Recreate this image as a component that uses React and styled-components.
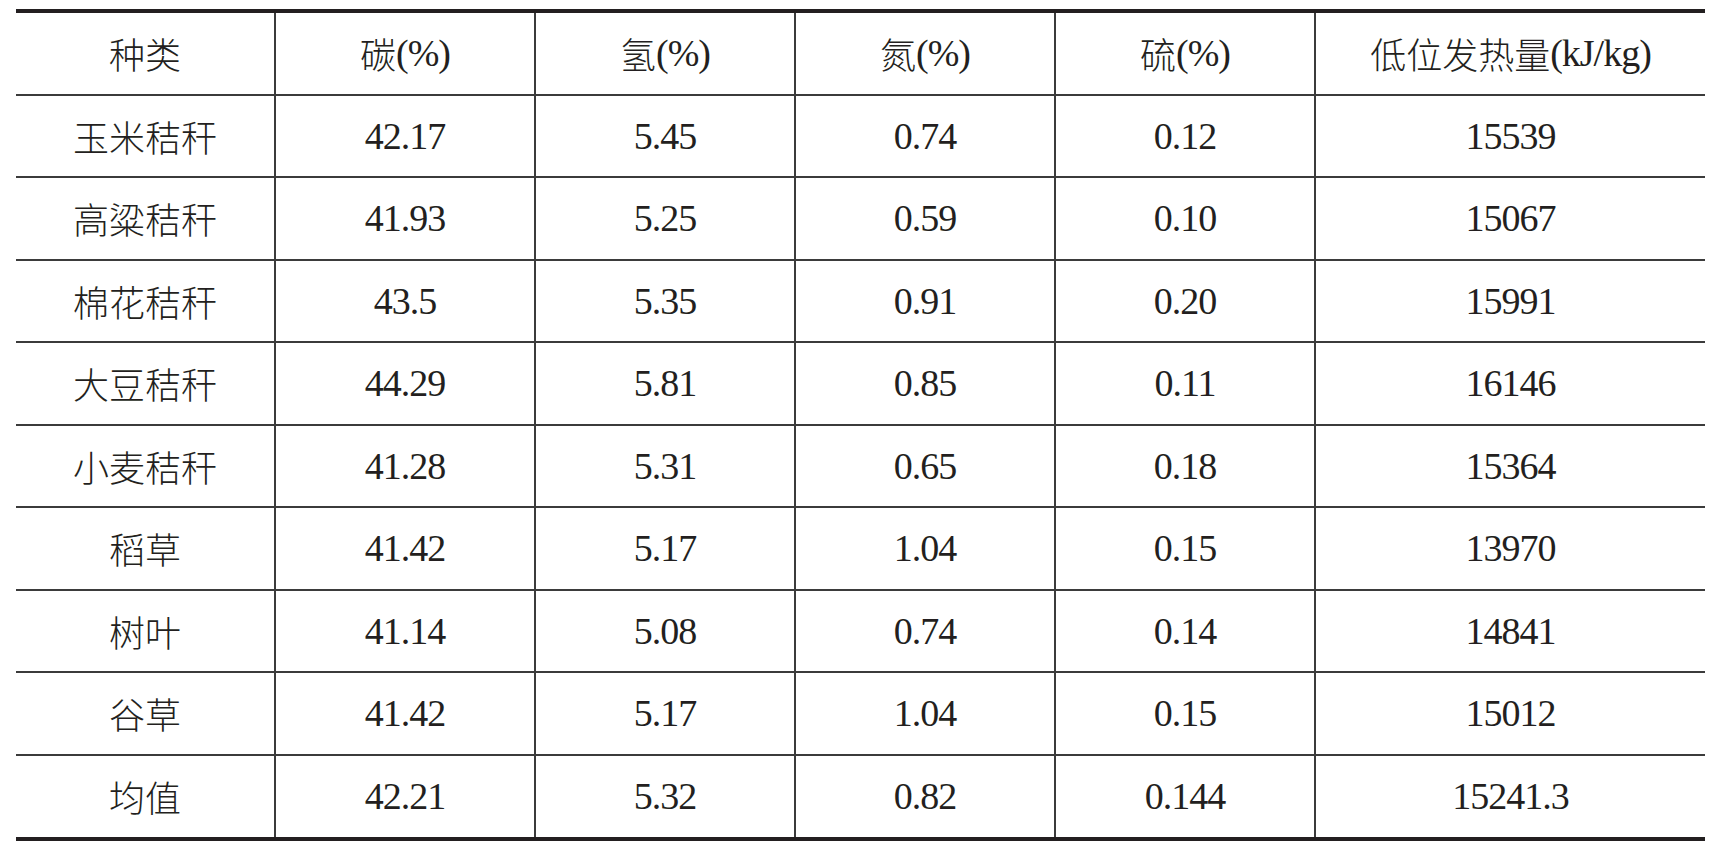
import React from "react";
import styled, { createGlobalStyle } from "styled-components";

const GlobalStyle = createGlobalStyle`
  html, body {
    margin: 0;
    padding: 0;
    background: #ffffff;
  }
  body {
    color: #231f20;
    font-family: 'Liberation Serif', serif;
  }
`;

const Page = styled.div`
  width: 1715px;
  height: 850px;
  padding: 9px 10px 0 16px;
  box-sizing: border-box;
`;

const Table = styled.div`
  width: 1689px;
  display: grid;
  grid-template-columns: repeat(5, 260px) 389px;
  border-top: 4px solid #231f20;
  border-bottom: 4px solid #231f20;
  font-family: 'Liberation Serif', serif;
`;

const Cell = styled.div`
  height: ${(p) => (p.$last ? "81px" : "80.5px")};
  display: flex;
  align-items: center;
  justify-content: center;
  border-right: ${(p) => (p.$end ? "none" : "2px solid #3b3b3b")};
  border-bottom: ${(p) => (p.$last ? "none" : "2px solid #3b3b3b")};
  line-height: 1;
  white-space: nowrap;
`;

const Num = styled.span`
  font-family: 'Liberation Serif', serif;
  font-size: 38px;
  letter-spacing: -1px;
`;

const Cjk = styled.span`
  font-family: 'Noto Sans CJK SC', sans-serif;
  font-size: 36px;
  font-weight: 300;
`;

const header = [
  ["种类", ""],
  ["碳", "(%)"],
  ["氢", "(%)"],
  ["氮", "(%)"],
  ["硫", "(%)"],
  ["低位发热量", "(kJ/kg)"],
];

const rows = [
  ["玉米秸秆", "42.17", "5.45", "0.74", "0.12", "15539"],
  ["高粱秸秆", "41.93", "5.25", "0.59", "0.10", "15067"],
  ["棉花秸秆", "43.5", "5.35", "0.91", "0.20", "15991"],
  ["大豆秸秆", "44.29", "5.81", "0.85", "0.11", "16146"],
  ["小麦秸秆", "41.28", "5.31", "0.65", "0.18", "15364"],
  ["稻草", "41.42", "5.17", "1.04", "0.15", "13970"],
  ["树叶", "41.14", "5.08", "0.74", "0.14", "14841"],
  ["谷草", "41.42", "5.17", "1.04", "0.15", "15012"],
  ["均值", "42.21", "5.32", "0.82", "0.144", "15241.3"],
];

export default function App() {
  return (
    <>
      <GlobalStyle />
      <Page>
        <Table>
          {header.map(([name, unit], i) => (
            <Cell key={"h" + i} $end={i === 5}>
              <Cjk>{name}</Cjk>
              {unit && <Num>{unit}</Num>}
            </Cell>
          ))}
          {rows.map((row, r) =>
            row.map((v, i) => (
              <Cell
                key={r + "-" + i}
                $end={i === 5}
                $last={r === rows.length - 1}
              >
                {i === 0 ? <Cjk>{v}</Cjk> : <Num>{v}</Num>}
              </Cell>
            ))
          )}
        </Table>
      </Page>
    </>
  );
}
